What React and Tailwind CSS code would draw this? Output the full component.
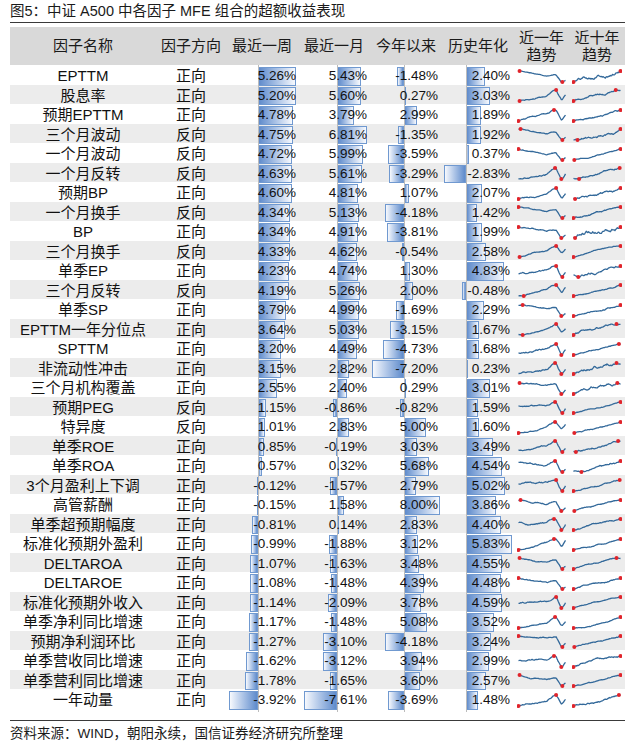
import React from "react";

const rows = [
  ["EPTTM", "正向", 5.26, 5.43, -1.48, 2.4],
  ["股息率", "正向", 5.2, 5.6, 0.27, 3.03],
  ["预期EPTTM", "正向", 4.78, 3.79, 2.99, 1.89],
  ["三个月波动", "反向", 4.75, 6.81, -1.35, 1.92],
  ["一个月波动", "反向", 4.72, 5.99, -3.59, 0.37],
  ["一个月反转", "反向", 4.63, 5.61, -3.29, -2.83],
  ["预期BP", "正向", 4.6, 4.81, 1.07, 2.07],
  ["一个月换手", "反向", 4.34, 5.13, -4.18, 1.42],
  ["BP", "正向", 4.34, 4.91, -3.81, 1.99],
  ["三个月换手", "反向", 4.33, 4.62, -0.54, 2.58],
  ["单季EP", "正向", 4.23, 4.74, 1.3, 4.83],
  ["三个月反转", "反向", 4.19, 5.26, 2.0, -0.48],
  ["单季SP", "正向", 3.79, 4.99, -1.69, 2.29],
  ["EPTTM一年分位点", "正向", 3.64, 5.03, -3.15, 1.67],
  ["SPTTM", "正向", 3.2, 4.49, -4.73, 1.68],
  ["非流动性冲击", "正向", 3.15, 2.82, -7.2, 0.23],
  ["三个月机构覆盖", "正向", 2.55, 2.4, 0.29, 3.01],
  ["预期PEG", "反向", 1.15, -0.86, -0.82, 1.59],
  ["特异度", "反向", 1.01, 2.83, 5.0, 1.6],
  ["单季ROE", "正向", 0.85, -0.19, 3.03, 3.49],
  ["单季ROA", "正向", 0.57, 0.32, 5.68, 4.54],
  ["3个月盈利上下调", "正向", -0.12, -1.57, 2.79, 5.02],
  ["高管薪酬", "正向", -0.15, 1.58, 8.0, 3.86],
  ["单季超预期幅度", "正向", -0.81, 0.14, 2.83, 4.4],
  ["标准化预期外盈利", "正向", -0.99, -1.88, 3.12, 5.83],
  ["DELTAROA", "正向", -1.07, -1.63, 3.48, 4.55],
  ["DELTAROE", "正向", -1.08, -1.48, 4.39, 4.48],
  ["标准化预期外收入", "正向", -1.14, -2.09, 3.78, 4.59],
  ["单季净利同比增速", "正向", -1.17, -1.48, 5.08, 3.52],
  ["预期净利润环比", "正向", -1.27, -3.1, -4.18, 3.24],
  ["单季营收同比增速", "正向", -1.62, -3.12, 3.94, 2.99],
  ["单季营利同比增速", "正向", -1.78, -1.65, 3.6, 2.57],
  ["一年动量", "正向", -3.92, -7.61, -3.69, 1.48],
];

// axis offset inside the cell (px) and px per 1%
const cols = [
  { axis: 32, scale: 7.3, pad: "pr-[2px]" },
  { axis: 39, scale: 4.37, pad: "pr-[3px]" },
  { axis: 34, scale: 4.45, pad: "pr-[4px]" },
  { axis: 24, scale: 7.85, pad: "pr-[4px]" },
];

function mulberry32(a) {
  return function () {
    a |= 0;
    a = (a + 0x6d2b79f5) | 0;
    let t = Math.imul(a ^ (a >>> 15), 1 | a);
    t = (t + Math.imul(t ^ (t >>> 7), 61 | t)) ^ t;
    return ((t ^ (t >>> 14)) >>> 0) / 4294967296;
  };
}

function series(seed, kind) {
  const rand = mulberry32(seed);
  const out = [];
  let v = 0;
  if (kind === "y") {
    const n = 46;
    const drift = (rand() - 0.5) * 0.5;
    for (let i = 0; i < n; i++) {
      const p = i / n;
      let step = (rand() - 0.5) * 0.9 + drift;
      if (p > 0.6 && p < 0.75) step += 0.35;
      if (p > 0.8 && p < 0.9) step -= 1.6;
      if (p >= 0.92) step += 1.1;
      v += step;
      out.push(v);
    }
  } else {
    const n = 60;
    const drift = 0.12 + rand() * 0.25;
    for (let i = 0; i < n; i++) {
      v += (rand() - 0.5) * 1.1 + drift;
      out.push(v);
    }
  }
  return out;
}

function Spark({ seed, kind }) {
  const data = series(seed, kind);
  const w = 50;
  const h = 15;
  const min = Math.min(...data);
  const max = Math.max(...data);
  const pts = data.map((d, i) => [
    1.5 + (i / (data.length - 1)) * (w - 3),
    h - 2 - ((d - min) / (max - min || 1)) * (h - 4),
  ]);
  const iMax = data.indexOf(max);
  const iMin = data.indexOf(min);
  return (
    <svg width={w} height={h} viewBox={`0 0 ${w} ${h}`}>
      <polyline
        points={pts.map((p) => p.join(",")).join(" ")}
        fill="none"
        stroke="#33699a"
        strokeWidth="1.3"
        strokeLinejoin="round"
      />
      <circle cx={pts[iMax][0]} cy={pts[iMax][1]} r="2" fill="#e0242b" />
      <circle cx={pts[iMin][0]} cy={pts[iMin][1]} r="2" fill="#e0242b" />
    </svg>
  );
}

function BarCell({ value, col }) {
  const width = Math.abs(value) * col.scale;
  const left = value >= 0 ? col.axis : col.axis - width;
  return (
    <div className={`relative h-full flex items-center justify-end ${col.pad}`}>
      <div
        className={
          value >= 0
            ? "absolute top-[2px] bottom-[2px] border border-[#7099d0] bg-linear-to-r from-[#5f8bcb] to-[#f7f9fd]"
            : "absolute top-[2px] bottom-[2px] border border-[#7099d0] bg-linear-to-l from-[#5f8bcb] to-[#f7f9fd]"
        }
        style={{ left: left + "px", width: width + "px" }}
      />
      <div
        className="absolute top-0 bottom-0 w-px bg-[#bcbcbc]"
        style={{ left: col.axis + "px" }}
      />
      <span className="relative text-[13.5px] text-[#111]">
        {value.toFixed(2)}%
      </span>
    </div>
  );
}

const grid =
  "grid grid-cols-[146px_70px_72px_72px_72px_72px_55px_56px] items-center";

export default function App() {
  return (
    <div
      className="w-[631px] h-[751px] bg-white"
      style={{ fontFamily: '"Liberation Sans", "Noto Sans CJK SC", sans-serif' }}
    >
      <div className="ml-[10px] w-[615px] pt-[2px]">
        <div className="h-[21px] flex items-center text-[14.5px] text-[#1a1a1a] border-b-[1.5px] border-[#3a3a3a]">
          图5：中证 A500 中各因子 MFE 组合的超额收益表现
        </div>
        <div className={`${grid} mt-[4px] h-[38px] bg-[#d9d9d9] text-[15px] text-[#1a1a1a] text-center`}>
          <div>因子名称</div>
          <div>因子方向</div>
          <div>最近一周</div>
          <div>最近一月</div>
          <div>今年以来</div>
          <div>历史年化</div>
          <div className="leading-[17px]">
            近一年
            <br />
            趋势
          </div>
          <div className="leading-[17px]">
            近十年
            <br />
            趋势
          </div>
        </div>
        {rows.map((r, i) => (
          <div
            key={r[0]}
            className={`${grid} h-[19.5px] ${i % 2 === 1 ? "bg-[#ececec]" : "bg-white"}`}
          >
            <div className="text-center text-[15px] text-[#111] whitespace-nowrap">
              {r[0]}
            </div>
            <div className="text-center text-[15px] text-[#111]">{r[1]}</div>
            {cols.map((c, k) => (
              <BarCell key={k} value={r[2 + k]} col={c} />
            ))}
            <div className="flex justify-center items-center">
              <Spark seed={i * 31 + 7} kind="y" />
            </div>
            <div className="flex justify-center items-center">
              <Spark seed={i * 57 + 101} kind="t" />
            </div>
          </div>
        ))}
        <div className="mt-[11px] border-t-[1.5px] border-[#3a3a3a] pt-[3px] text-[13.5px] text-[#1a1a1a]">
          资料来源：WIND，朝阳永续，国信证券经济研究所整理
        </div>
      </div>
    </div>
  );
}
